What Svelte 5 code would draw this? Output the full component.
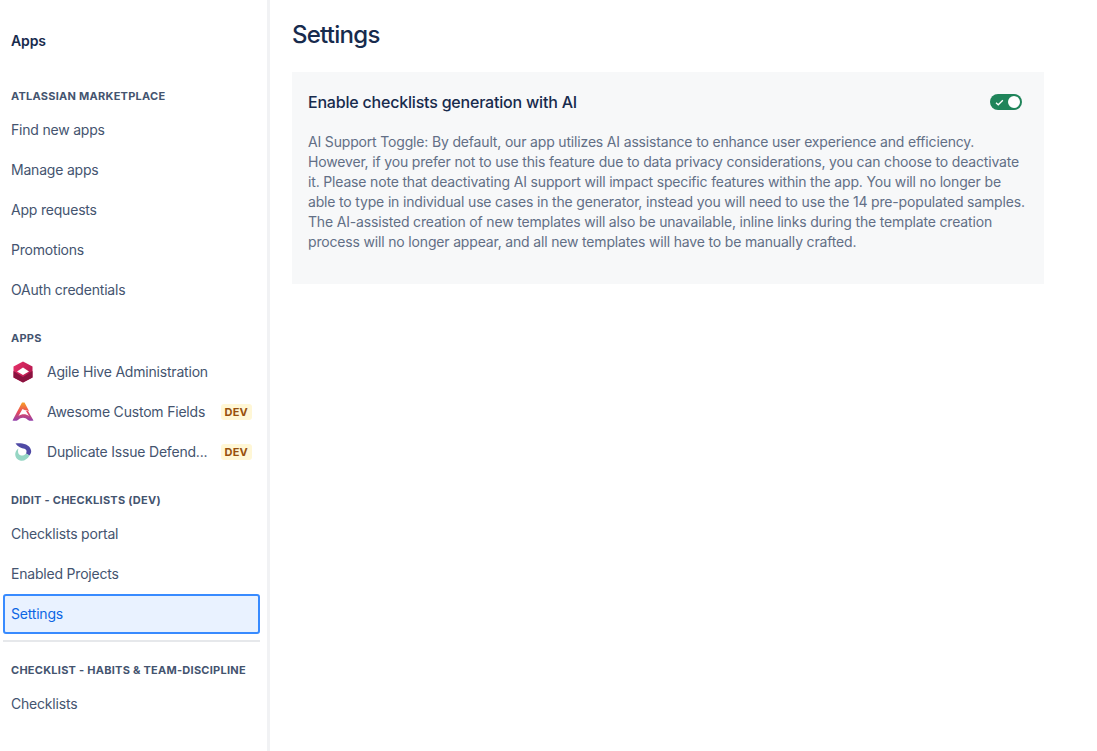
<script>
  const marketplace = ['Find new apps', 'Manage apps', 'App requests', 'Promotions', 'OAuth credentials'];
  const didit = ['Checklists portal', 'Enabled Projects'];
</script>

<div class="page">
  <aside class="sidebar">
    <div class="title">Apps</div>

    <h3 class="heading first">ATLASSIAN MARKETPLACE</h3>
    {#each marketplace as item}
      <div class="item">{item}</div>
    {/each}

    <h3 class="heading">APPS</h3>
    <div class="item">
      <svg class="icon" viewBox="0 0 24 24">
        <defs>
          <linearGradient id="hive" x1="0" y1="0" x2="1" y2="0.6">
            <stop offset="0" stop-color="#e8316a" />
            <stop offset="1" stop-color="#b5174e" />
          </linearGradient>
        </defs>
        <path d="M12 1.500 21.500 6.500V17.500L12 22.500 2.500 17.500V6.500z" fill="url(#hive)" />
        <path d="M2.500 11 12 17l9.500-6v6.500L12 22.500 2.500 17.500z" fill="#8a1340" />
        <path d="M12 7.500 18 11.500 12 15 6 11.500z" fill="#fff" />
      </svg>
      <span class="label">Agile Hive Administration</span>
    </div>
    <div class="item">
      <svg class="icon" viewBox="0 0 24 24">
        <defs>
          <linearGradient id="acf" x1="0" y1="0" x2="0" y2="1">
            <stop offset="0" stop-color="#f7a023" />
            <stop offset="0.5" stop-color="#ea4a5a" />
            <stop offset="1" stop-color="#9140ac" />
          </linearGradient>
        </defs>
        <path d="M11 2.500 13.500 2.500 18 11 13.500 10 11.500 9 7.500 16C10.500 13.500 15 13.500 18 16L15 11 17 11 22.500 20.500C20.500 21 18.500 21 17 20 14 17 10 17 7 20 5.500 21 3.500 21 1.500 20.500z" fill="url(#acf)" />
      </svg>
      <span class="label">Awesome Custom Fields</span>
      <span class="badge">DEV</span>
    </div>
    <div class="item">
      <svg class="icon" viewBox="0 0 24 24">
        <path d="M4.500 3.500C10 3 18 3.500 20 10c.5 2 0 3.500-1.500 5.500L15 13.500c1.200-2.200.5-4-1.500-4.700C10.500 8 7 7 4.500 3.500z" fill="#4f4aa5" />
        <path d="M18.500 15.500c-2 4-6 6-9.500 5C5.500 19.500 3.500 16 4.500 12.500 5 10.500 6 9.500 7.500 8.500 6.500 11 7 14.800 10 15.500c2 .4 3.500-.3 5-2z" fill="#96d6c4" />
      </svg>
      <span class="label">Duplicate Issue Defend...</span>
      <span class="badge">DEV</span>
    </div>

    <h3 class="heading">DIDIT - CHECKLISTS (DEV)</h3>
    {#each didit as item}
      <div class="item">{item}</div>
    {/each}
    <div class="item selected">Settings</div>

    <div class="divider"></div>

    <h3 class="heading after-divider">CHECKLIST - HABITS &amp; TEAM-DISCIPLINE</h3>
    <div class="item">Checklists</div>
  </aside>

  <main class="main">
    <h1>Settings</h1>
    <section class="card">
      <div class="card-head">
        <h2>Enable checklists generation with AI</h2>
        <div class="toggle">
          <svg class="check" viewBox="0 0 10 8">
            <path d="M1 4.200 3.600 6.600 8.800 1.400" fill="none" stroke="#fff" stroke-width="1.500" />
          </svg>
          <span class="knob"></span>
        </div>
      </div>
      <p>AI Support Toggle: By default, our app utilizes AI assistance to enhance user experience and efficiency. However, if you prefer not to use this feature due to data privacy considerations, you can choose to deactivate it. Please note that deactivating AI support will impact specific features within the app. You will no longer be able to type in individual use cases in the generator, instead you will need to use the 14 pre-populated samples. The AI-assisted creation of new templates will also be unavailable, inline links during the template creation process will no longer appear, and all new templates will have to be manually crafted.</p>
    </section>
  </main>
</div>

<style>
  :global(body) {
    margin: 0;
    background: #fff;
  }
  .page {
    display: flex;
    height: 751px;
    overflow: hidden;
    font-family: Inter, "Liberation Sans", sans-serif;
    font-size: 14px;
    line-height: 20px;
    letter-spacing: -0.2px;
    color: #172b4d;
  }
  .sidebar {
    box-sizing: border-box;
    width: 270px;
    flex: none;
    border-right: 3px solid #f1f2f4;
    padding: 0 7px 0 3px;
  }
  .title {
    height: 68px;
    padding: 31px 8px 0;
    box-sizing: border-box;
    font-size: 14px;
    font-weight: 600;
    letter-spacing: -0.1px;
    color: #172b4d;
  }
  .heading {
    margin: 20px 0 6px;
    padding: 0 8px;
    font-size: 11px;
    line-height: 16px;
    font-weight: 700;
    letter-spacing: 0.25px;
    color: #44546f;
  }
  .heading.after-divider {
    margin-top: 20px;
  }
  .item {
    box-sizing: border-box;
    height: 40px;
    padding: 0 8px;
    display: flex;
    align-items: center;
    color: #44546f;
    white-space: nowrap;
  }
  .item.selected {
    background: #e9f2ff;
    color: #0c66e4;
    border: 2px solid #388bff;
    border-radius: 3px;
    padding: 0 6px;
  }
  .icon {
    width: 24px;
    height: 24px;
    flex: none;
    margin-right: 12px;
  }
  .label {
    flex: 1;
    min-width: 0;
  }
  .badge {
    box-sizing: border-box;
    height: 16px;
    padding: 0 4px;
    background: #fff7d6;
    color: #974f0c;
    border-radius: 3px;
    font-size: 11px;
    line-height: 16px;
    font-weight: 700;
    letter-spacing: 0.2px;
  }
  .divider {
    height: 2px;
    background: #e6e8eb;
    margin-top: 6px;
  }
  .main {
    flex: 1;
    min-width: 0;
    padding: 0 53px 0 22px;
  }
  h1 {
    margin: 0;
    height: 72px;
    padding-top: 19px;
    box-sizing: border-box;
    font-size: 24px;
    line-height: 32px;
    font-weight: 450;
    letter-spacing: -0.75px;
    color: #172b4d;
  }
  .card {
    box-sizing: border-box;
    height: 212px;
    padding: 20px 16px 0;
    background: #f7f8f9;
  }
  .card-head {
    display: flex;
    align-items: center;
    justify-content: space-between;
    height: 20px;
    padding-right: 6px;
  }
  h2 {
    margin: 0;
    font-size: 16px;
    line-height: 20px;
    font-weight: 500;
    letter-spacing: -0.2px;
    color: #172b4d;
  }
  .toggle {
    box-sizing: border-box;
    width: 32px;
    height: 16px;
    border-radius: 8px;
    background: #1f845a;
    display: flex;
    align-items: center;
    justify-content: space-between;
    padding: 0 2px 0 5px;
  }
  .check {
    width: 9px;
    height: 7px;
  }
  .knob {
    width: 12px;
    height: 12px;
    border-radius: 50%;
    background: #fff;
  }
  p {
    margin: 20px 0 0;
    font-size: 14px;
    line-height: 20px;
    letter-spacing: -0.17px;
    color: #626f86;
  }
</style>
